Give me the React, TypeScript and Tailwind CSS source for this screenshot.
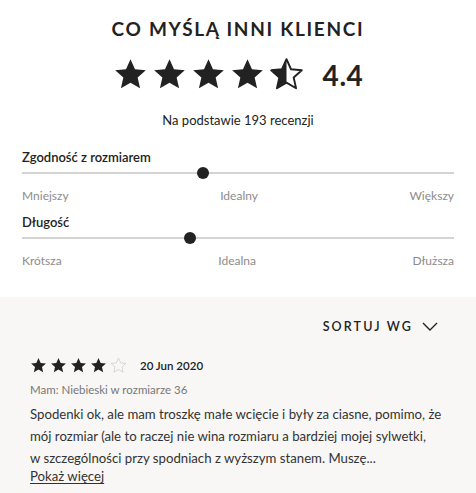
import React from "react";

const STAR =
  "M12 1.5l3.09 6.9 7.41.7-5.6 4.96 1.66 7.34L12 17.6l-6.56 3.8 1.66-7.34L1.5 9.1l7.41-.7z";

function Star({ fill, size }: { fill: "full" | "half" | "empty"; size: number }) {
  const id = React.useId();
  return (
    <svg width={size} height={size} viewBox="0 0 24 24">
      {fill === "half" && (
        <defs>
          <clipPath id={id}>
            <rect x="0" y="0" width="12" height="24" />
          </clipPath>
        </defs>
      )}
      {fill === "full" && <path d={STAR} fill="#222" />}
      {fill === "half" && (
        <>
          <path d={STAR} fill="none" stroke="#222" strokeWidth="1.3" strokeLinejoin="round" />
          <path d={STAR} fill="#222" clipPath={`url(#${id})`} />
        </>
      )}
      {fill === "empty" && <path d={STAR} fill="none" stroke="#c8c8c8" strokeWidth="1" strokeLinejoin="round" />}
    </svg>
  );
}

const SCALES = [
  { title: "Zgodność z rozmiarem", pos: 41.8, labels: ["Mniejszy", "Idealny", "Większy"] },
  { title: "Długość", pos: 39, labels: ["Krótsza", "Idealna", "Dłuższa"] },
];

function Scale({ title, pos, labels }: { title: string; pos: number; labels: string[] }) {
  return (
    <div>
      <p className="text-[13px] font-semibold text-[#222] leading-[16px]">{title}</p>
      <div className="relative mt-[7px] h-[2px] bg-[#d4d4d4]">
        <span
          className="absolute top-1/2 h-[12px] w-[12px] -translate-x-1/2 -translate-y-1/2 rounded-full bg-[#222]"
          style={{ left: `${pos}%` }}
        />
      </div>
      <div className="mt-[14px] flex justify-between text-[12px] leading-[16px] text-[#8c8c8c]">
        {labels.map((l) => (
          <span key={l}>{l}</span>
        ))}
      </div>
    </div>
  );
}

export default function App() {
  return (
    <div className="w-[476px] h-[493px] overflow-hidden bg-white font-['Lato',sans-serif] text-[#222]">
      <section className="px-[22px] pt-[17px] pb-[28px]">
        <h2 className="text-center text-[19px] font-bold tracking-[0.09em] leading-[24px]">CO MYŚLĄ INNI KLIENCI</h2>
        <div className="mt-[16px] flex items-center justify-center">
          <div className="flex gap-[4px]">
            <Star fill="full" size={35} />
            <Star fill="full" size={35} />
            <Star fill="full" size={35} />
            <Star fill="full" size={35} />
            <Star fill="half" size={35} />
          </div>
          <span className="ml-[19px] text-[28px] font-bold leading-[34px] tracking-[0.02em]">4.4</span>
        </div>
        <p className="mt-[20px] text-center text-[13px] leading-[16px]">Na podstawie 193 recenzji</p>
        <div className="mt-[21px] flex flex-col gap-[10px]">
          {SCALES.map((s) => (
            <Scale key={s.title} {...s} />
          ))}
        </div>
      </section>
      <section className="h-full bg-[#f8f7f5] px-[30px] pt-[22px]">
        <div className="flex items-center justify-end gap-[9px] pr-[8px]">
          <span className="text-[12.5px] font-semibold leading-[16px] tracking-[0.17em]">SORTUJ WG</span>
          <svg width="16" height="10" viewBox="0 0 16 10" fill="none" stroke="#222" strokeWidth="1.4">
            <path d="M1 1l7 7 7-7" />
          </svg>
        </div>
        <div className="mt-[22px] flex items-center">
          <div className="flex gap-[3px]">
            <Star fill="full" size={17} />
            <Star fill="full" size={17} />
            <Star fill="full" size={17} />
            <Star fill="full" size={17} />
            <Star fill="empty" size={17} />
          </div>
          <span className="ml-[13px] text-[11.5px] font-semibold leading-[17px]">20 Jun 2020</span>
        </div>
        <p className="mt-[9px] text-[11.5px] leading-[14px] text-[#777]">Mam: Niebieski w rozmiarze 36</p>
        <p className="mt-[6px] -mr-[6px] text-[13.2px] leading-[22px] text-[#333]">
          <span className="block">Spodenki ok, ale mam troszkę małe wcięcie i były za ciasne, pomimo, że</span>
          <span className="block">mój rozmiar (ale to raczej nie wina rozmiaru a bardziej mojej sylwetki,</span>
          <span className="block">w szczególności przy spodniach z wyższym stanem. Muszę...</span>
        </p>
        <a className="block text-[13.2px] leading-[14px] text-[#333] underline underline-offset-2">Pokaż więcej</a>
      </section>
    </div>
  );
}
